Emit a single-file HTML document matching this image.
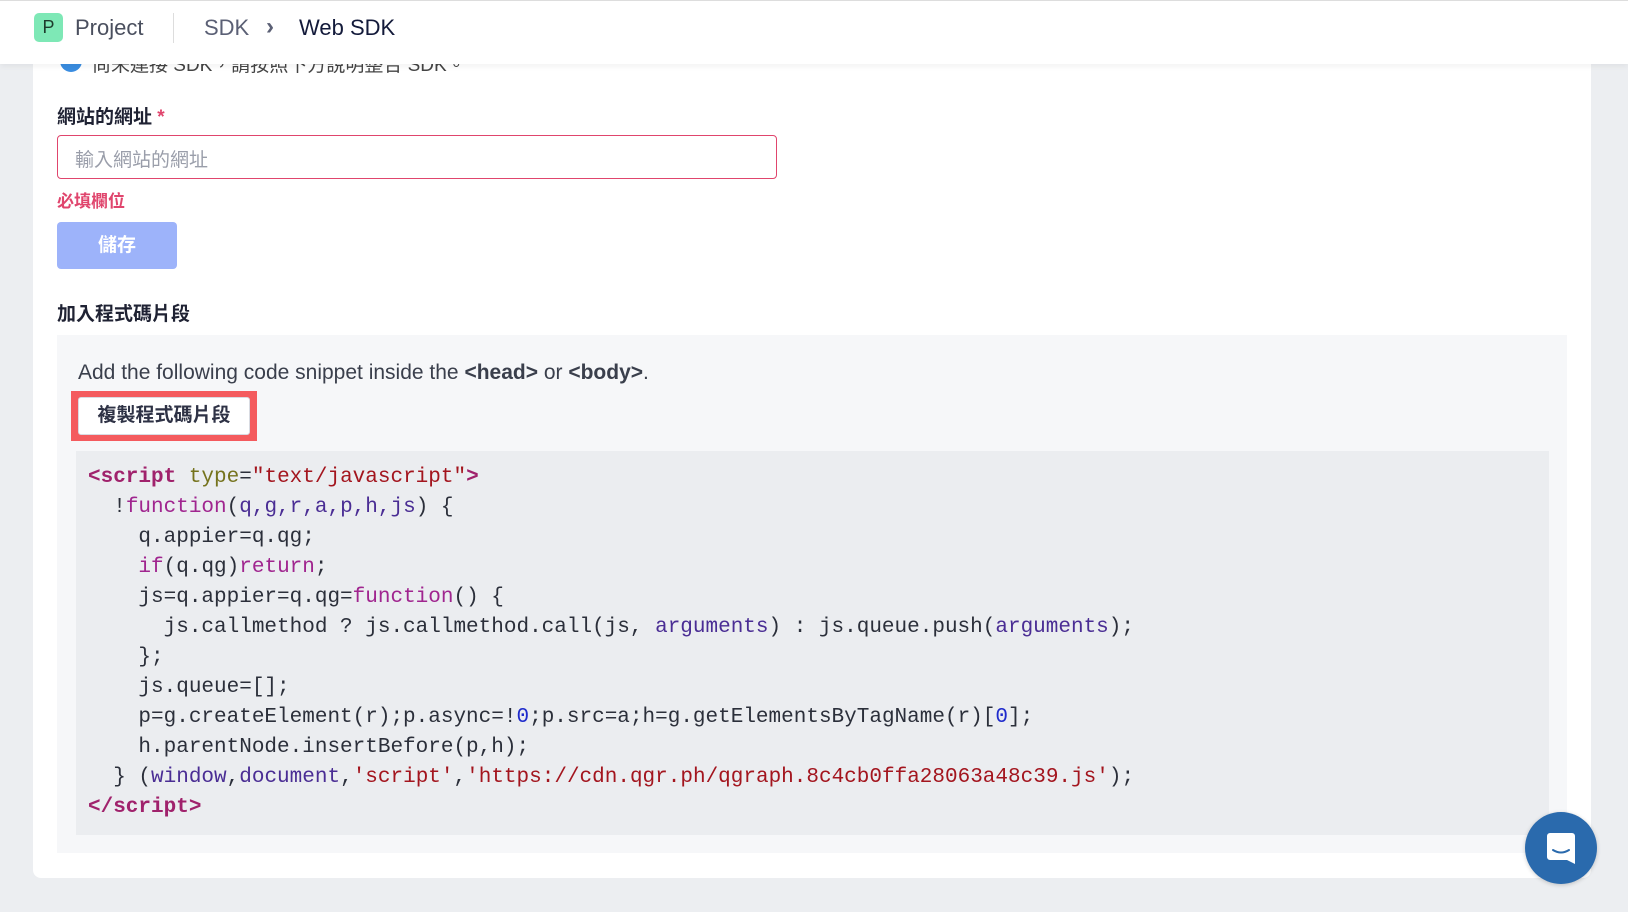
<!DOCTYPE html>
<html><head><meta charset="utf-8"><style>
body{margin:0;width:1628px;height:912px;background:#eceef1;font-family:"Liberation Sans","Noto Sans CJK TC",sans-serif;position:relative;overflow:hidden;color:#1f2233}
.card{position:absolute;left:33px;top:40px;width:1558px;height:838px;background:#fff;border-radius:8px}
.hdr{position:absolute;left:0;top:0;width:1628px;height:63px;background:#fff;box-shadow:0 2px 6px rgba(0,0,0,.06);border-top:1px solid #ddd;z-index:2}
.abs{position:absolute}
pre{margin:0;font-family:"Liberation Mono",monospace;font-size:21px;line-height:30px;color:#2b2f3a}
.t{color:#a0226c;font-weight:bold}.a{color:#75731d}.s{color:#a3151e}.k{color:#a0258f}.p{color:#4a2d94}.n{color:#1f2bcc}
</style></head><body>
<div class="card"></div>
<div class="abs" style="left:60px;top:50px;width:22px;height:22px;border-radius:50%;background:#3a8de0"></div>
<div class="abs" style="left:92px;top:50px;font-size:19px;color:#444">尚未連接 SDK，請按照下方說明整合 SDK。</div>
<div class="hdr">
 <div class="abs" style="left:34px;top:12px;width:29px;height:29px;background:#7ee8b6;border-radius:5px;font-size:18px;line-height:29px;text-align:center;color:#1d3b2c">P</div>
 <div class="abs" style="left:75px;top:14px;font-size:22px;color:#4a4f5e">Project</div>
 <div class="abs" style="left:173px;top:12px;width:1px;height:30px;background:#ddd"></div>
 <div class="abs" style="left:204px;top:14px;font-size:22px;color:#5b6075">SDK</div>
 <div class="abs" style="left:266px;top:12px;font-size:24px;color:#5b6075;font-weight:bold">›</div>
 <div class="abs" style="left:299px;top:14px;font-size:22px;color:#131a3a">Web SDK</div>
</div>
<div class="abs" style="left:57px;top:102px;font-size:19px;font-weight:bold">網站的網址 <span style="color:#e0456d">*</span></div>
<div class="abs" style="left:57px;top:135px;width:720px;height:44px;border:1.5px solid #e0456d;border-radius:4px;box-sizing:border-box"><span style="position:absolute;left:17px;top:9px;font-size:19px;color:#9a9eaa">輸入網站的網址</span></div>
<div class="abs" style="left:57px;top:187px;font-size:17px;font-weight:bold;color:#e0456d">必填欄位</div>
<div class="abs" style="left:57px;top:222px;width:120px;height:47px;background:#9db3fa;border-radius:4px;color:#fff;font-size:19px;font-weight:bold;text-align:center;line-height:47px">儲存</div>
<div class="abs" style="left:57px;top:299px;font-size:19px;font-weight:bold">加入程式碼片段</div>
<div class="abs" style="left:57px;top:335px;width:1510px;height:518px;background:#f6f7f9"></div>
<div class="abs" style="left:78px;top:361px;font-size:21px;color:#3a3f4c">Add the following code snippet inside the <b>&lt;head&gt;</b> or <b>&lt;body&gt;</b>.</div>
<div class="abs" style="left:71px;top:391px;width:186px;height:50px;background:#f45b5e"></div>
<div class="abs" style="left:78px;top:397px;width:172px;height:38px;background:#fff;border:1px solid #d8dbe2;box-sizing:border-box;border-radius:3px;font-size:19px;font-weight:bold;color:#2e3245;text-align:center;line-height:36px">複製程式碼片段</div>
<div class="abs" style="left:76px;top:451px;width:1473px;height:384px;background:#ebedf0"></div>
<pre class="abs" style="left:88px;top:463px"><span class="t">&lt;script</span> <span class="a">type</span>=<span class="s">"text/javascript"</span><span class="t">&gt;</span>
  !<span class="k">function</span>(<span class="p">q,g,r,a,p,h,js</span>) {
    q.appier=q.qg;
    <span class="k">if</span>(q.qg)<span class="k">return</span>;
    js=q.appier=q.qg=<span class="k">function</span>() {
      js.callmethod ? js.callmethod.call(js, <span class="p">arguments</span>) : js.queue.push(<span class="p">arguments</span>);
    };
    js.queue=[];
    p=g.createElement(r);p.async=!<span class="n">0</span>;p.src=a;h=g.getElementsByTagName(r)[<span class="n">0</span>];
    h.parentNode.insertBefore(p,h);
  } (<span class="p">window</span>,<span class="p">document</span>,<span class="s">'script'</span>,<span class="s">'https://cdn.qgr.ph/qgraph.8c4cb0ffa28063a48c39.js'</span>);
<span class="t">&lt;/script&gt;</span></pre>
<div class="abs" style="left:1525px;top:812px;width:72px;height:72px;border-radius:50%;background:#2a6aad;box-shadow:0 1px 4px rgba(0,0,0,.2)">
<svg width="72" height="72" viewBox="0 0 72 72"><path d="M22 24a3 3 0 0 1 3-3h22a3 3 0 0 1 3 3v28l-8-4H25a3 3 0 0 1-3-3z" fill="#fff"/><path d="M28 38q8 5 16 0" stroke="#2a6aad" stroke-width="2" fill="none" stroke-linecap="round"/></svg></div>
</body></html>
